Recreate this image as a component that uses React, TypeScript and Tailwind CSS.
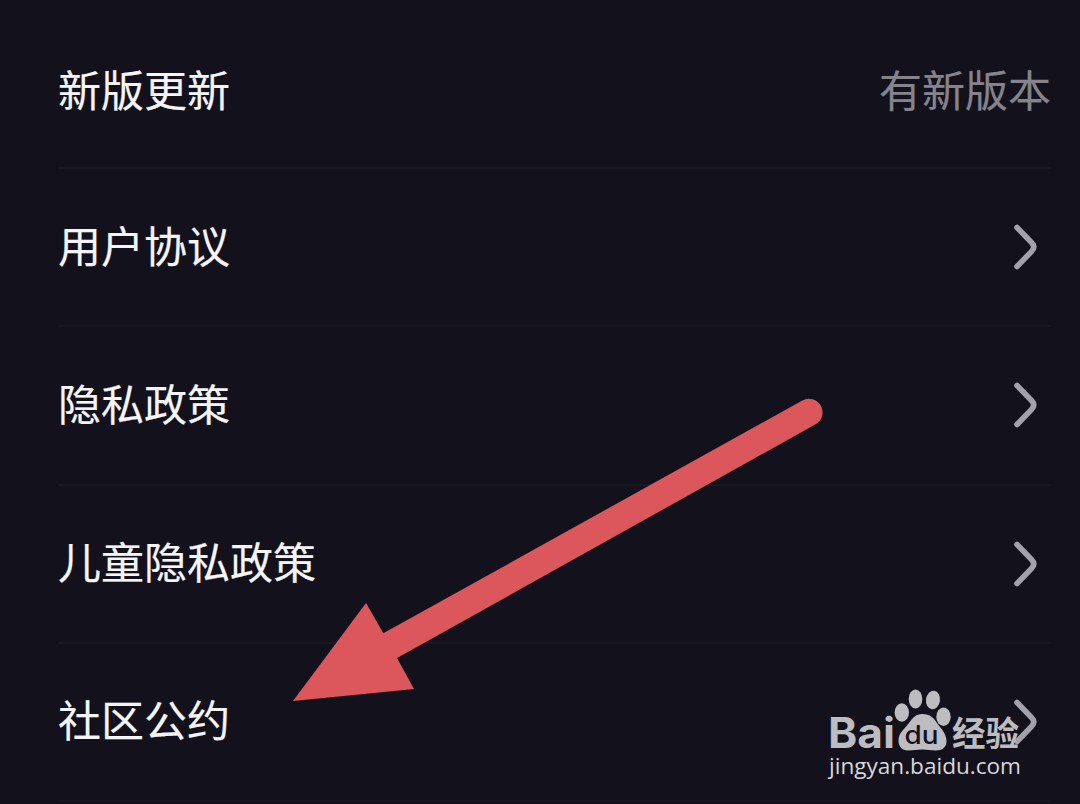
interface SettingItem {
  id: string;
  label: string;
  value?: string;
}

const items: SettingItem[] = [
  { id: 'update', label: '新版更新', value: '有新版本' },
  { id: 'terms', label: '用户协议' },
  { id: 'privacy', label: '隐私政策' },
  { id: 'children', label: '儿童隐私政策' },
  { id: 'community', label: '社区公约' },
];

function Chevron() {
  return (
    <svg className="w-6 h-12 mr-[14px]" viewBox="0 0 24 48" fill="none">
      <path
        d="M4 4.5 L18.5 19.5 Q23 24 18.5 28.5 L4 43.5"
        stroke="#a3a1aa"
        strokeWidth="5.5"
        strokeLinecap="round"
        strokeLinejoin="round"
      />
    </svg>
  );
}

function Arrow() {
  return (
    <svg
      className="absolute left-0 top-0 pointer-events-none"
      width="1080"
      height="804"
      viewBox="0 0 1080 804"
    >
      <path
        d="M293 701 L366 603 L383.3 633.3 L802.3 400.5 A13.6 13.6 0 0 1 815.5 424.3 L397 658 L414 689 Z"
        fill="#dc575c"
      />
    </svg>
  );
}

function Watermark() {
  return (
    <svg
      className="absolute left-[820px] top-[680px] pointer-events-none"
      width="210"
      height="110"
      viewBox="0 0 210 110"
      fill="#bdbcc1"
    >
      <text
        x="8"
        y="68"
        textLength="67"
        lengthAdjust="spacingAndGlyphs"
        className="font-['Inter',sans-serif] font-bold text-[42px]"
      >
        Bai
      </text>

      {/* Paw */}
      <ellipse cx="81.8" cy="32.5" rx="7.2" ry="9.3" />
      <ellipse cx="95.5" cy="19" rx="6.8" ry="9.5" />
      <ellipse cx="113" cy="20" rx="7" ry="9.3" transform="rotate(8 113 20)" />
      <ellipse cx="123.5" cy="36.8" rx="7.2" ry="9.2" />
      <path d="M102.5 34 C110 34 114 38 117 43 C119.5 47 126.5 53 126.5 61 C126.5 67.5 122 70.5 116 70.5 C111 70.5 107 69.5 102 69.5 C97 69.5 93 70.5 88 70.5 C82 70.5 78.5 66.5 78.5 60.5 C78.5 52.5 85.5 48 89 43 C92.5 38 95.5 34 102.5 34 Z" />
      <text
        x="84.5"
        y="63.5"
        textLength="34"
        lengthAdjust="spacingAndGlyphs"
        fill="#13111c"
        className="font-['Inter',sans-serif] font-medium text-[25px]"
      >
        du
      </text>

      <text
        x="132"
        y="66"
        textLength="67"
        lengthAdjust="spacingAndGlyphs"
        className="font-['Noto_Sans_CJK_SC',sans-serif] font-bold text-[34px]"
      >
        经验
      </text>
      <text
        x="9"
        y="94"
        textLength="192"
        lengthAdjust="spacingAndGlyphs"
        fill="#d8d7dc"
        className="font-['Open_Sans',sans-serif] font-medium text-[22.5px]"
      >
        jingyan.baidu.com
      </text>
    </svg>
  );
}

export default function App() {
  return (
    <div className="relative w-[1080px] h-[804px] overflow-hidden bg-[#13111c] font-['Noto_Sans_CJK_SC',sans-serif]">
      <div className="pt-[11px] pl-[58px] pr-[29px]">
        {items.map((item) => (
          <div
            key={item.id}
            className="h-[158.2px] flex items-center justify-between border-b-2 border-[#191721]"
          >
            <span
              className={`text-[43px] leading-none text-[#f5f5f7] [-webkit-text-stroke:0.2px_#f5f5f7] ${
                item.value ? 'pb-px' : 'pb-[6px]'
              }`}
            >
              {item.label}
            </span>
            {item.value ? (
              <span className="pb-px text-[43px] leading-none text-[#85838b] [-webkit-text-stroke:0.2px_#85838b]">
                {item.value}
              </span>
            ) : (
              <Chevron />
            )}
          </div>
        ))}
      </div>

      <Arrow />
      <Watermark />
    </div>
  );
}
